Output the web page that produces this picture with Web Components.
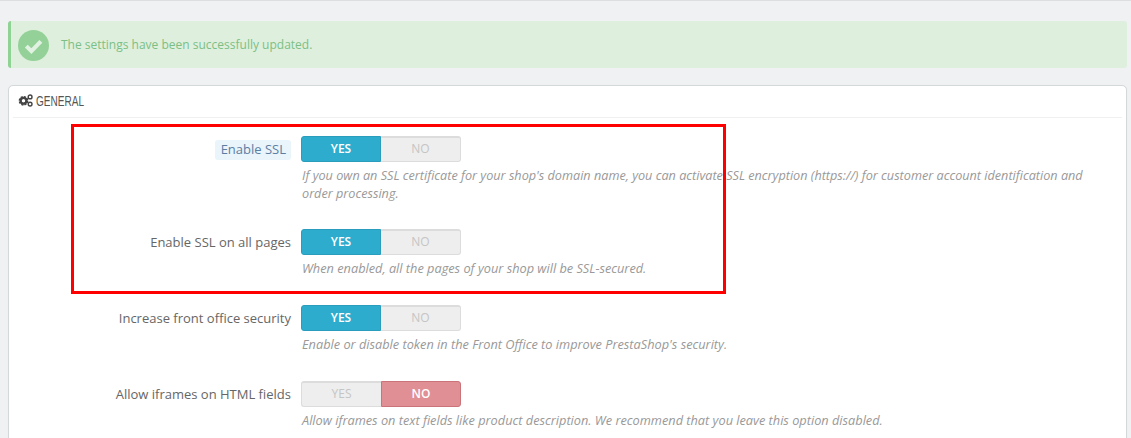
<!DOCTYPE html>
<html><head><meta charset="utf-8">
<style>
html,body{margin:0;padding:0;height:438px;overflow:hidden;background:#eff1f3;font-family:"Open Sans",sans-serif}
</style></head><body>
<ps-page>
  <ps-alert>The settings have been successfully updated.</ps-alert>
  <ps-panel heading="General">
    <ps-row label="Enable SSL" value="yes" hl>If you own an SSL certificate for your shop's domain name, you can activate SSL encryption (https://) for customer account identification and order processing.</ps-row>
    <ps-row label="Enable SSL on all pages" value="yes">When enabled, all the pages of your shop will be SSL-secured.</ps-row>
    <ps-row label="Increase front office security" value="yes">Enable or disable token in the Front Office to improve PrestaShop's security.</ps-row>
    <ps-row label="Allow iframes on HTML fields" value="no">Allow iframes on text fields like product description. We recommend that you leave this option disabled.</ps-row>
  </ps-panel>
  <ps-mark></ps-mark>
</ps-page>
<script>
function def(name, html){
  customElements.define(name, class extends HTMLElement{
    connectedCallback(){
      if(this.shadowRoot) return;
      this.attachShadow({mode:'open'}).innerHTML = typeof html==='function'?html(this):html;
    }
  });
}
def('ps-page',`<style>:host{display:flex;flex-direction:column;position:relative;height:438px;box-sizing:border-box;border-top:1px solid #dcdee1;padding:20px 4px 0 8px;overflow:hidden}::slotted(*){flex:none}</style><slot></slot>`);
def('ps-alert',`<style>
:host{display:flex;align-items:center;height:47px;box-sizing:border-box;background:#deefde;border-left:3px solid #8fd294;border-radius:3px;padding-left:7px;color:#7cbf84;font-size:12px;margin-bottom:17px}
svg{width:31px;height:31px;margin:2px 12px 0 0;flex:none}
</style><svg viewBox="0 0 32 32"><circle cx="16" cy="16" r="16" fill="#94d198"/><path d="M8.6 16.6l5.2 5.2 9.8-10" fill="none" stroke="#e2f2e2" stroke-width="4.2"/></svg><span><slot></slot></span>`);
def('ps-panel',e=>`<style>
:host{display:block;background:#fff;border:1px solid #d3d8db;border-radius:5px;padding:0 4px;height:400px;box-sizing:border-box;box-shadow:0 0 1px #e4e6e8}
header{display:flex;align-items:center;height:29px;padding:0 0 2px 5px;border-bottom:1px solid #eef0f1;box-sizing:content-box;margin-bottom:18px}
svg{width:15px;height:13px;flex:none;margin-right:3px}
.t{font:400 15px/1 "Liberation Sans",sans-serif;text-transform:uppercase;display:inline-block;transform:scaleX(.67);transform-origin:0 50%;white-space:nowrap;color:#555}
</style><header><svg viewBox="0 0 15 13"><g fill="none" stroke="#444"><circle cx="5.5" cy="6.8" r="3.4" stroke-width="3" stroke-dasharray="1.7 .95"/><circle cx="5.5" cy="6.8" r="2.9" stroke-width="2.2"/><circle cx="12.1" cy="2.9" r="1.9" stroke-width="1.4"/><circle cx="12.1" cy="10.1" r="1.9" stroke-width="1.4"/></g></svg><span class="t">${e.getAttribute('heading')}</span></header><slot></slot>`);
def('ps-row',e=>{
  const v=e.getAttribute('value'), hl=e.hasAttribute('hl');
  return `<style>
:host{display:grid;grid-template-columns:288px 1fr;margin-bottom:${hl?27:28}px}
.l{display:flex;justify-content:flex-end;align-items:flex-start;height:26px;padding:0 10px 0 0;box-sizing:border-box}
.l span{font-size:13px;line-height:20px;margin-top:3px;color:#666;white-space:nowrap}
.l span.hl{margin-top:4px;line-height:20px;height:20px;position:relative;padding:0 5px 0 6px;background:#eaf4fb;color:#5b7ea3;border-radius:3px}
.l span.hl b{font-weight:400;display:block;margin-top:-1px}
.c{min-width:0}
.sw{display:flex;width:160px;height:26px;font-size:12px;font-weight:600;line-height:24px;text-align:center}
.sw div{width:80px;box-sizing:border-box}
.off{background:#eeeeee;border:1px solid #dcdcdc;border-top:2px solid #dcdcdc;color:#c5c5c5;line-height:22px!important;font-weight:400}
.yes{background:#2eacce;color:#fff;border:1px solid #2a9dbd;border-radius:3px 0 0 3px}
.no{background:#e08f95;color:#fff;border:1px solid #ca7378;border-radius:0 3px 3px 0}
.off.a{border-radius:3px 0 0 3px;border-right:0}.off.b{border-radius:0 3px 3px 0;border-left:0}
p{margin:4px 0 0;font-size:${hl?12.66:12.75}px;font-style:italic;line-height:18px;color:#999;padding:0 26px 0 1px}
</style><div class="l"><span class="${hl?'hl':''}">${hl?'<b>'+e.getAttribute('label')+'</b>':e.getAttribute('label')}</span></div>
<div class="c"><div class="sw">${v==='yes'?'<div class="yes">YES</div><div class="off b">NO</div>':'<div class="off a">YES</div><div class="no">NO</div>'}</div><p><slot></slot></p></div>`});
def('ps-mark',`<style>:host{position:absolute;left:71px;top:123px;width:655px;height:170px;box-sizing:border-box;border:3px solid #ff0000;pointer-events:none}</style>`);
</script>
</body></html>
